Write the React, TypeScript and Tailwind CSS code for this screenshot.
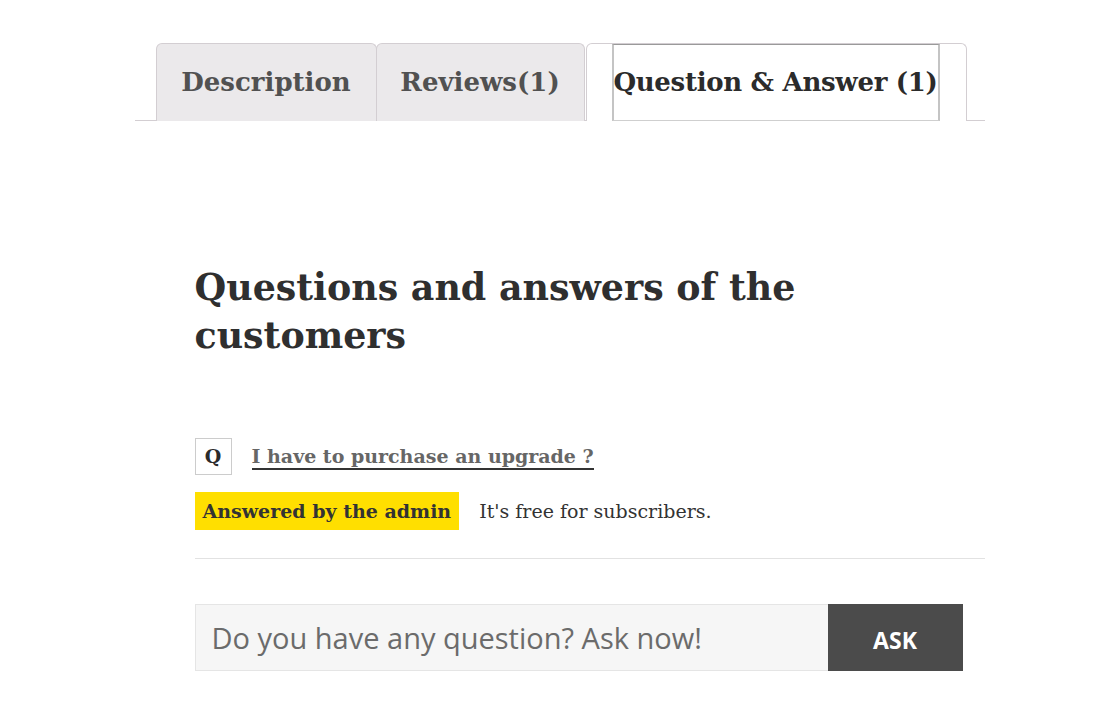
import React, { useState } from 'react';

const serif = "font-['DejaVu_Serif','Liberation_Serif',serif]";
const sans = "font-['Open_Sans','Noto_Sans',sans-serif]";

const App: React.FC = () => {
  const [question, setQuestion] = useState('');

  return (
    <div className="min-h-screen bg-white">
      <div className="mx-auto w-[850px] pt-[43px]">
        {/* tabs */}
        <ul className="flex items-end border-b border-[#d3ced2] pl-[21px]">
          <li className="relative -mb-px flex h-[78px] w-[221px] items-center justify-center rounded-t-[6px] border border-b-0 border-[#d3ced2] bg-[#ebe9eb]">
            <span className={`${serif} text-[26px] font-bold text-[#515151]`}>Description</span>
          </li>
          <li className="relative -mb-px -ml-px flex h-[78px] w-[209px] items-center justify-center rounded-t-[6px] border border-b-0 border-[#d3ced2] bg-[#ebe9eb]">
            <span className={`${serif} text-[26px] font-bold text-[#515151]`}>Reviews(1)</span>
          </li>
          <li className="relative -mb-px ml-px flex h-[78px] w-[381px] items-stretch rounded-t-[6px] border border-b-0 border-[#d3ced2] bg-white pl-[25px]">
            <a className="flex h-[77px] w-[328px] items-center justify-center border-x-2 border-t border-b border-x-[#c4c4c4] border-t-[#9a9a9a] border-b-[#cfcfcf]">
              <span className={`${serif} whitespace-nowrap text-[26px] font-bold tracking-[-0.3px] text-[#2b2b2b]`}>Question &amp; Answer (1)</span>
            </a>
          </li>
        </ul>

        {/* panel */}
        <div className="pl-[60px]">
          <h2 className={`${serif} mt-[143px] w-[640px] text-[36.4px] font-bold leading-[48px] text-[#2f2f2f]`}>
            Questions and answers of the customers
          </h2>

          <div className="mt-[78px] flex items-center gap-[20px]">
            <div className={`${serif} flex h-[37px] w-[37px] items-center justify-center border border-[#cccccc] text-[19px] font-bold text-[#2b2b2b]`}>
              Q
            </div>
            <a className={`${serif} border-b-2 border-[#333] text-[19px] font-bold leading-[24px] text-[#666]`}>
              I have to purchase an upgrade ?
            </a>
          </div>

          <div className="mt-[17px] flex items-center gap-[20px]">
            <span className={`${serif} flex h-[38px] items-center bg-[#ffdf00] px-[8px] text-[19px] font-bold text-[#333]`}>
              Answered by the admin
            </span>
            <span className={`${serif} text-[19px] text-[#333]`}>It's free for subscribers.</span>
          </div>

          <div className="mt-[28px] border-t border-[#e2e2e2]" />

          <form className="mt-[45px] flex w-[768px]" onSubmit={(e) => e.preventDefault()}>
            <input
              value={question}
              onChange={(e) => setQuestion(e.target.value)}
              placeholder="Do you have any question? Ask now!"
              className={`${sans} h-[67px] w-[633px] border border-r-0 border-[#e5e5e5] bg-[#f6f6f6] px-[16px] text-[29px] text-[#666] placeholder:text-[#6b6b6b] outline-none`}
            />
            <button className={`${sans} h-[67px] w-[135px] bg-[#4b4b4b] pt-[6px] text-[23px] font-bold text-white`}>ASK</button>
          </form>
        </div>
      </div>
    </div>
  );
};

export default App;
